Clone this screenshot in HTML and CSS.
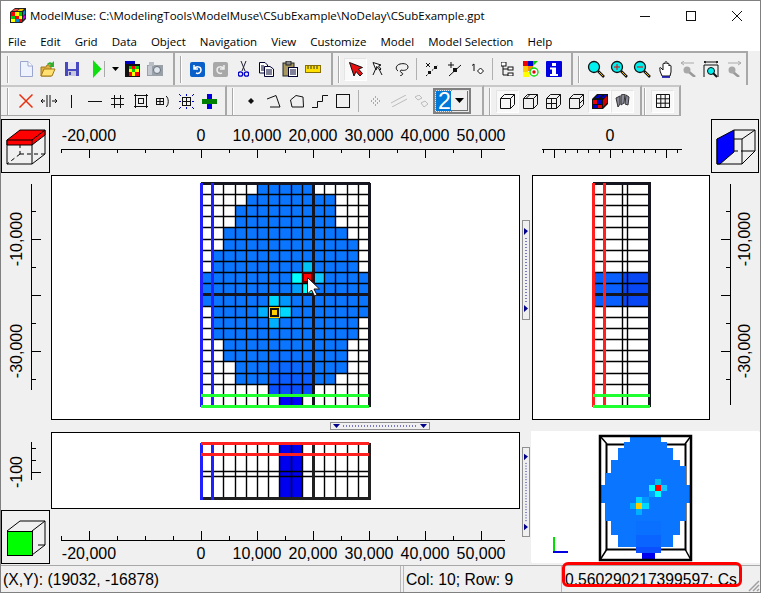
FILE: index.html
```html
<!DOCTYPE html>
<html lang="en">
<head>
    <meta charset="UTF-8">
    <title>ModelMuse</title>
    <link rel="stylesheet" href="styles.css">
</head>
<body>
<div class="window">
    <div class="titlebar">
        <svg class="app-icon" width="16" height="16" viewBox="0 0 16 16">
            <path d="M0 4L5 0H16V11L12 15H0Z" fill="#222"/>
            <rect x="1" y="4" width="4" height="4" fill="#f00"/><rect x="5" y="4" width="4" height="4" fill="#ff0"/><rect x="9" y="4" width="3" height="4" fill="#0c0"/>
            <rect x="1" y="8" width="4" height="3" fill="#0c0"/><rect x="5" y="8" width="4" height="3" fill="#f00"/><rect x="9" y="8" width="3" height="3" fill="#ff0"/>
            <rect x="1" y="11" width="4" height="3" fill="#ff0"/><rect x="5" y="11" width="4" height="3" fill="#08c"/><rect x="9" y="11" width="3" height="3" fill="#f00"/>
            <path d="M2 3L5 1H9L6 3Z" fill="#f44"/><path d="M7 3L10 1H14L12 3Z" fill="#fc0"/><path d="M13 4L15 2V6L13 8Z" fill="#08c"/><path d="M13 9L15 7V10L13 12Z" fill="#c0f"/>
        </svg>
        <span class="title-text">ModelMuse: C:\ModelingTools\ModelMuse\CSubExample\NoDelay\CSubExample.gpt</span>
        <div class="win-buttons">
            <svg width="46" height="30" viewBox="0 0 46 30"><path d="M18 15.500H28" stroke="#111"/></svg>
            <svg width="46" height="30" viewBox="0 0 46 30"><rect x="18.500" y="10.500" width="9" height="9" fill="none" stroke="#111"/></svg>
            <svg width="46" height="30" viewBox="0 0 46 30"><path d="M18 10L28 20M28 10L18 20" stroke="#111"/></svg>
        </div>
    </div>

    <div class="menubar">
        <span>File</span><span>Edit</span><span>Grid</span><span>Data</span><span>Object</span><span>Navigation</span><span>View</span><span>Customize</span><span>Model</span><span>Model Selection</span><span>Help</span>
    </div>

    <div class="toolrow tall">
        <div class="band w174 first">
            <i class="handle"></i>
            <span class="tool"><svg width="16" height="16" viewBox="0 0 16 16"><path d="M2.500 .5H10L14.500 5V15.500H2.500Z" fill="#eef2fc" stroke="#9aa6d0"/><path d="M10 .5V5H14.500" fill="#fff" stroke="#9aa6d0"/></svg></span>
            <span class="tool"><svg width="17" height="17" viewBox="0 0 17 17"><path d="M1 6H6L7 4H11V15H1Z" fill="#e0b040" stroke="#a07818"/><path d="M1 15L4 8H15L12 15Z" fill="#ffe070" stroke="#a07818"/><path d="M7 3C9 1 11 1 12 2L14 0V6H9L11 4C10 3 9 3 8 4Z" fill="#30b030"/></svg></span>
            <span class="tool"><svg width="16" height="16" viewBox="0 0 16 16"><path d="M1 1H15V15H1Z" fill="#4848c0"/><rect x="4" y="1" width="8" height="7" fill="#e8e8f4"/><rect x="4" y="10" width="8" height="5" fill="#c8c8dc"/><rect x="5" y="11" width="2" height="3" fill="#4848c0"/></svg></span>
            <span class="tool run"><svg width="14" height="18" viewBox="0 0 14 18"><path d="M1 0L9.500 9L1 18Z" fill="#10e010"/><path d="M12.500 1V17" stroke="#aaa"/></svg></span>
            <span class="tool drop"><svg width="7" height="4" viewBox="0 0 7 4"><path d="M0 0H7L3.500 4Z" fill="#000"/></svg></span>
            <span class="tool"><svg width="16" height="16" viewBox="0 0 16 16"><rect x="1" y="0" width="10" height="5" fill="#0000c0"/><rect x="1" y="3" width="15" height="13" fill="#111"/><rect x="5" y="5" width="3" height="3" fill="#0c0"/><rect x="8" y="5" width="3" height="3" fill="#f00"/><rect x="11" y="5" width="4" height="3" fill="#0c0"/><rect x="5" y="8" width="3" height="3" fill="#ff0"/><rect x="8" y="8" width="3" height="3" fill="#0c0"/><rect x="11" y="8" width="4" height="3" fill="#ff0"/><rect x="5" y="11" width="3" height="4" fill="#f00"/><rect x="8" y="11" width="3" height="4" fill="#ff0"/><rect x="11" y="11" width="4" height="4" fill="#f00"/></svg></span>
            <span class="tool"><svg width="16" height="14" viewBox="0 0 16 14"><rect x="0" y="3" width="16" height="11" fill="#9aa0a8"/><rect x="2" y="0" width="5" height="4" fill="#b8bcc4"/><circle cx="10" cy="8" r="3.500" fill="#dfe6ee" stroke="#6a7078"/><rect x="1" y="4" width="4" height="9" fill="#c4c8d0"/></svg></span>
        </div>
        <div class="band w158">
            <i class="handle"></i>
            <span class="tool"><svg width="15" height="15" viewBox="0 0 15 15"><rect width="15" height="15" rx="2" fill="#0a60c8"/><path d="M4 3V7H8M4 7C6 4 11 4 11 8C11 11 8 12 6 11" fill="none" stroke="#fff" stroke-width="1.500"/></svg></span>
            <span class="tool"><svg width="15" height="15" viewBox="0 0 15 15"><rect width="15" height="15" rx="2" fill="#a8a8a8"/><path d="M11 3V7H7M11 7C9 4 4 4 4 8C4 11 7 12 9 11" fill="none" stroke="#eee" stroke-width="1.500"/></svg></span>
            <span class="tool"><svg width="11" height="16" viewBox="0 0 11 16"><path d="M3 0L7 10M8 0L4 10" stroke="#223" fill="none"/><circle cx="2.500" cy="13" r="2.200" fill="none" stroke="#00c" stroke-width="1.300"/><circle cx="8.500" cy="13" r="2.200" fill="none" stroke="#00c" stroke-width="1.300"/></svg></span>
            <span class="tool"><svg width="15" height="15" viewBox="0 0 15 15"><path d="M.5 .5H6L8.500 3V11H.5Z" fill="#fff" stroke="#003"/><path d="M5.500 4.500H11L14.500 7V14.500H5.500Z" fill="#fff" stroke="#003"/><path d="M2 4H5M2 6H5M2 8H5M7 8H13M7 10H13M7 12H13" stroke="#003"/></svg></span>
            <span class="tool"><svg width="16" height="16" viewBox="0 0 16 16"><rect x="1" y="2" width="11" height="13" fill="#a89860" stroke="#222"/><rect x="4" y="0" width="5" height="4" fill="#888" stroke="#222"/><rect x="6.500" y="6.500" width="9" height="9" fill="#fff" stroke="#003"/><path d="M8 9H14M8 11H14M8 13H14" stroke="#003"/></svg></span>
            <span class="tool"><svg width="16" height="8" viewBox="0 0 16 8"><rect x=".5" y=".5" width="15" height="7" fill="#ffe000" stroke="#887000"/><path d="M3 1V4M6 1V4M9 1V4M12 1V4" stroke="#333"/></svg></span>
        </div>
        <div class="band w240">
            <i class="handle"></i>
            <span class="tool pressed"><svg width="14" height="15" viewBox="0 0 14 15"><path d="M.5 .5L5 14L7 9.500L11 14L13.500 11.500L9.500 7L13.500 5.500Z" fill="#e81010" stroke="#111"/></svg></span>
            <span class="tool"><svg width="13" height="14" viewBox="0 0 13 14"><path d="M1 .5L4 8L5.500 5L8 8L9 7L6.500 4L9 3Z" fill="#fff" stroke="#111"/><path d="M5 4L1 13M7 7L10 13" stroke="#111" fill="none"/></svg></span>
            <span class="tool"><svg width="14" height="13" viewBox="0 0 14 13"><path d="M3 8C0 6 1 2 5 1C9 0 13 1 13 4C13 7 9 8 6 7C5 8 5 9 7 10C9 11 7 12 5 13" fill="none" stroke="#111"/></svg></span>
            <i class="sep"></i>
            <span class="tool"><svg width="14" height="15" viewBox="0 0 14 15"><path d="M1 1L5 5M5 1L1 5" stroke="#111"/><path d="M1 14L13 3" stroke="#111" stroke-dasharray="2 2"/><rect x="3" y="9" width="3" height="3" fill="#111"/><rect x="9" y="4" width="3" height="3" fill="#111"/></svg></span>
            <span class="tool"><svg width="14" height="15" viewBox="0 0 14 15"><path d="M3 0V6M0 3H6M1 14L13 3" stroke="#111"/><rect x="5" y="6" width="4" height="4" fill="#111"/></svg></span>
            <span class="tool"><svg width="12" height="12" viewBox="0 0 12 12"><path d="M2 1L0 2.500M2 1V8" stroke="#111" fill="none"/><path d="M8.500 5L11.500 8L8.500 11L5.500 8Z" fill="#fff" stroke="#111"/></svg></span>
            <i class="sep"></i>
            <span class="tool"><svg width="13" height="14" viewBox="0 0 13 14"><path d="M2 1V13H7M2 7H7" fill="none" stroke="#111"/><rect x="0" y="0" width="5" height="4" fill="#fff" stroke="#111"/><rect x="7" y="5" width="5" height="3" fill="#fff" stroke="#111"/><rect x="7" y="11" width="5" height="3" fill="#fff" stroke="#111"/></svg></span>
            <span class="tool"><svg width="16" height="16" viewBox="0 0 16 16"><rect width="5" height="5" fill="#e00"/><rect x="5" width="5" height="5" fill="#00c"/><path d="M10 0H15L10 5Z" fill="#0c0"/><rect y="5" width="5" height="6" fill="#fc0"/><rect x="5" y="5" width="5" height="5" fill="#f80"/><rect y="11" width="6" height="5" fill="#ff0"/><circle cx="11" cy="11" r="4" fill="#fff" stroke="#0d0" stroke-width="1.300"/><circle cx="11" cy="11" r="1.700" fill="#e00"/></svg></span>
            <span class="tool"><svg width="16" height="16" viewBox="0 0 16 16"><rect width="16" height="16" rx="1" fill="#0000e0"/><rect x="6" y="2" width="4" height="3" fill="#fff"/><path d="M4 6.500H10V13H12V15H4V13H6V8.500H4Z" fill="#fff"/></svg></span>
        </div>
        <div class="band w175">
            <i class="handle"></i>
            <span class="tool"><svg width="18" height="18" viewBox="0 0 18 18"><path d="M11 11L17 17" stroke="#111" stroke-width="2.500"/><path d="M12 12L16 16" stroke="#e0b000"/><circle cx="7" cy="7" r="5.500" fill="#00f0f0" stroke="#111" stroke-width="1.300"/></svg></span>
            <span class="tool"><svg width="18" height="18" viewBox="0 0 18 18"><path d="M11 11L17 17" stroke="#111" stroke-width="2.500"/><path d="M12 12L16 16" stroke="#e0b000"/><circle cx="7" cy="7" r="5.500" fill="#00f0f0" stroke="#111" stroke-width="1.300"/><path d="M4 7H10M7 4V10" stroke="#e00"/></svg></span>
            <span class="tool"><svg width="18" height="18" viewBox="0 0 18 18"><path d="M11 11L17 17" stroke="#111" stroke-width="2.500"/><path d="M12 12L16 16" stroke="#e0b000"/><circle cx="7" cy="7" r="5.500" fill="#00f0f0" stroke="#111" stroke-width="1.300"/><path d="M4 7H10" stroke="#e00"/></svg></span>
            <span class="tool"><svg width="14" height="17" viewBox="0 0 14 17"><path d="M2 8V10L4 15H12L13 11V5C13 4 11 4 11 5V3C11 2 9 2 9 3V2C9 0 7 0 7 2V3C7 2 5 2 5 3V9L3 7C2 6 1 7 2 8Z" fill="#fff" stroke="#111"/><path d="M4 16H12" stroke="#00a" stroke-width="1.500"/></svg></span>
            <span class="tool"><svg width="16" height="16" viewBox="0 0 16 16"><path d="M1 2H14M1 2L4 0M1 2L4 4" stroke="#aaa" fill="none"/><path d="M9 11L15 16" stroke="#999" stroke-width="2.500"/><circle cx="7" cy="9" r="3.500" fill="#a8a8a8"/></svg></span>
            <span class="tool"><svg width="16" height="17" viewBox="0 0 16 17"><path d="M1 1H15M1 1L3 0M1 1L3 2M15 1L13 0M15 1L13 2" stroke="#111" fill="none"/><path d="M1 16V4H15V16" fill="none" stroke="#111"/><circle cx="8" cy="10" r="3.500" fill="#00f0f0" stroke="#111"/><path d="M10 12L14 16" stroke="#111" stroke-width="2"/></svg></span>
            <span class="tool"><svg width="16" height="16" viewBox="0 0 16 16"><path d="M2 2H15M15 2L12 0M15 2L12 4" stroke="#aaa" fill="none"/><path d="M7 11L13 16" stroke="#999" stroke-width="2.500"/><circle cx="6" cy="9" r="3.500" fill="#a8a8a8"/></svg></span>
        </div>
    </div>

    <div class="toolrow">
        <div class="band w226 first">
            <i class="handle"></i>
            <span class="tool"><svg width="14" height="14" viewBox="0 0 14 14"><path d="M.5 .5L13.500 13.500M13.500 .5L.5 13.500" stroke="#e83010" stroke-width="1.500"/></svg></span>
            <span class="tool"><svg width="16" height="12" viewBox="0 0 16 12"><path d="M6 0V12M9 0V12M0 6H4M11 6H16M0 6L2 4M0 6L2 8M16 6L14 4M16 6L14 8" stroke="#111" fill="none"/></svg></span>
            <span class="tool"><svg width="3" height="13" viewBox="0 0 3 13"><path d="M1.500 0V13" stroke="#111"/></svg></span>
            <span class="tool"><svg width="14" height="3" viewBox="0 0 14 3"><path d="M0 1.500H14" stroke="#111"/></svg></span>
            <span class="tool"><svg width="13" height="13" viewBox="0 0 13 13"><path d="M3.500 0V13M9.500 0V13M0 3.500H13M0 9.500H13" stroke="#111"/></svg></span>
            <span class="tool"><svg width="14" height="14" viewBox="0 0 14 14"><rect x="1.500" y="1.500" width="11" height="11" fill="none" stroke="#111"/><path d="M0 1.500H14M0 12.500H14M1.500 0V14M12.500 0V14" stroke="#111"/><rect x="4.500" y="4.500" width="5" height="5" fill="none" stroke="#111"/></svg></span>
            <span class="tool"><svg width="15" height="13" viewBox="0 0 15 13"><rect x=".5" y="3.500" width="7" height="6" fill="none" stroke="#111"/><path d="M4 3.500V9.500M.5 6.500H7.500M10 1C13 3 13 10 10 12" stroke="#111" fill="none"/></svg></span>
            <span class="tool"><svg width="15" height="15" viewBox="0 0 15 15"><rect x="3.500" y="3.500" width="8" height="8" fill="none" stroke="#111"/><path d="M7.500 3.500V11.500M3.500 7.500H11.500" stroke="#111"/><path d="M0 0L2 2M15 0L13 2M0 15L2 13M15 15L13 13M7.500 0V2M7.500 13V15M0 7.500H2M13 7.500H15" stroke="#00d"/></svg></span>
            <span class="tool"><svg width="15" height="15" viewBox="0 0 15 15"><rect x="5" y="0" width="5" height="15" fill="#0000e0"/><rect x="0" y="5" width="15" height="5" fill="#008000"/></svg></span>
        </div>
        <div class="band w257">
            <i class="handle"></i>
            <span class="tool"><svg width="6" height="6" viewBox="0 0 6 6"><path d="M3 0L6 3L3 6L0 3Z" fill="#111"/></svg></span>
            <span class="tool"><svg width="14" height="13" viewBox="0 0 14 13"><path d="M0 4L9 .5L13 12H3" fill="none" stroke="#111"/></svg></span>
            <span class="tool"><svg width="14" height="13" viewBox="0 0 14 13"><path d="M0.500 5L6 .5L13 2L13.500 12L2 12Z" fill="none" stroke="#111"/></svg></span>
            <span class="tool"><svg width="16" height="13" viewBox="0 0 16 13"><path d="M0 12.500H5.500V6.500H10.500V.5H16" fill="none" stroke="#111"/></svg></span>
            <span class="tool"><svg width="14" height="14" viewBox="0 0 14 14"><rect x=".5" y=".5" width="13" height="13" fill="none" stroke="#111"/></svg></span>
            <i class="sep wide"></i>
            <span class="tool"><svg width="11" height="11" viewBox="0 0 11 11"><path d="M5 1H6M3 3H4M7 3H8M1 5H2M5 5H6M9 5H10M3 7H4M7 7H8M5 9H6" stroke="#aaa" stroke-width="2"/></svg></span>
            <span class="tool"><svg width="16" height="12" viewBox="0 0 16 12"><path d="M0 8L15 0M1 12L16 4" stroke="#bbb"/></svg></span>
            <span class="tool"><svg width="15" height="13" viewBox="0 0 15 13"><path d="M1 2L5 0L8 3L4 5ZM7 8L11 6L14 9L10 12Z" fill="none" stroke="#bbb"/></svg></span>
            <div class="combo"><span class="combo-val">2</span><span class="combo-btn"><svg width="9" height="5" viewBox="0 0 9 5"><path d="M0 0H9L4.500 5Z" fill="#000"/></svg></span></div>
        </div>
        <div class="band w158">
            <i class="handle"></i>
            <span class="tool pressed"><svg width="15" height="15" viewBox="0 0 15 15"><path d="M.5 4.500H10.500V14.500H.5ZM.5 4.500L4.500 .5H14.500L10.500 4.500M14.500 .5V10.500L10.500 14.500" fill="none" stroke="#111"/></svg></span>
            <span class="tool"><svg width="15" height="15" viewBox="0 0 15 15"><path d="M.5 4.500H10.500V14.500H.5ZM.5 4.500L4.500 .5H14.500L10.500 4.500M14.500 .5V10.500L10.500 14.500M3 4.500L7 .5" fill="none" stroke="#111"/></svg></span>
            <span class="tool"><svg width="15" height="15" viewBox="0 0 15 15"><path d="M.5 4.500H10.500V14.500H.5ZM.5 4.500L4.500 .5H14.500L10.500 4.500M14.500 .5V10.500L10.500 14.500M.5 9.500H10.500M5.500 4.500V14.500" fill="none" stroke="#111"/></svg></span>
            <span class="tool"><svg width="15" height="15" viewBox="0 0 15 15"><path d="M.5 4.500H10.500V14.500H.5ZM.5 4.500L4.500 .5H14.500L10.500 4.500M14.500 .5V10.500L10.500 14.500M10.500 9.500L14.500 5.500" fill="none" stroke="#111"/></svg></span>
            <span class="tool pressed"><svg width="16" height="15" viewBox="0 0 16 15"><path d="M0 5L5 0H16V10L11 15H0Z" fill="#111"/><rect x="1" y="6" width="4" height="4" fill="#e00"/><rect x="6" y="6" width="4" height="4" fill="#00c"/><rect x="1" y="11" width="4" height="3" fill="#00c"/><rect x="6" y="11" width="4" height="3" fill="#e00"/><path d="M3 4L6 1H10L7 4ZM9 4L12 1H15L12 4Z" fill="#00c"/><path d="M11 6L15 2V9L11 13Z" fill="#c00"/></svg></span>
            <span class="tool pressed"><svg width="15" height="14" viewBox="0 0 15 14"><path d="M1 4L5 2V10L3 13ZM6 1L10 0L9 9L6 11ZM11 1L14 3L13 11L10 10Z" fill="#889" stroke="#333"/></svg></span>
        </div>
        <div class="band w39 slim">
            <i class="handle"></i>
            <span class="tool pressed"><svg width="14" height="14" viewBox="0 0 14 14"><path d="M.5 .5H13.500V13.500H.5ZM4.800 .5V13.500M9.200 .5V13.500M.5 4.800H13.500M.5 9.200H13.500" fill="none" stroke="#111"/></svg></span>
        </div>
    </div>

    <div class="workspace">
        <!-- top row: corner cube, ruler, side ruler, corner cube -->
        <div class="corner">
            <svg width="47" height="52" viewBox="2 120 47 52">
                <path d="M20 130V154M20 154H45M20 154L7 164" fill="none" stroke="#000" stroke-dasharray="4 3"/>
                <path d="M7 140H32V164H7ZM32 164L45 154V130" fill="none" stroke="#000"/>
                <path d="M7 140L20 130H45V135L32 145H7Z" fill="#f00" stroke="#000"/>
                <path d="M32 140V145M32 140L45 130M7 140H32" stroke="#000" fill="none"/>
            </svg>
        </div>
        <svg class="ruler" width="469" height="59" viewBox="51 116 469 59">
            <path d="M61 149.500H505M61.500 149V153M117.500 149V153M145.500 149V153M173.500 149V153M229.500 149V153M285.500 149V153M341.500 149V153M397.500 149V153M453.500 149V153M89.500 149V158M201.500 149V158M257.500 149V158M313.500 149V158M369.500 149V158M425.500 149V158M481.500 149V158" stroke="#000"/>
            <text x="89" y="141">-20,000</text><text x="201" y="141">0</text><text x="257" y="141">10,000</text><text x="313" y="141">20,000</text><text x="369" y="141">30,000</text><text x="425" y="141">40,000</text><text x="481" y="141">50,000</text>
        </svg>
        <div class="gap"></div>
        <svg class="ruler" width="178" height="59" viewBox="532 116 178 59">
            <path d="M542 149.500H682M543.500 149V153M565.500 149V153M577.500 149V153M588.500 149V153M599.500 149V153M622.500 149V153M633.500 149V153M644.500 149V153M655.500 149V153M677.500 149V153M554.500 149V158M610.500 149V158M666.500 149V158" stroke="#000"/>
            <text x="610" y="141">0</text>
        </svg>
        <div class="corner right">
            <svg width="46" height="52" viewBox="712 120 46 52">
                <path d="M734 130H755V151H745M742 139L755 130M742 164L755 151" fill="none" stroke="#000"/>
                <path d="M734 151H745" fill="none" stroke="#000" stroke-dasharray="4 3"/>
                <path d="M717 139H742V164H717Z" fill="none" stroke="#000"/>
                <path d="M717 139L734 130V152L720 164H717Z" fill="#00f" stroke="#000"/>
            </svg>
        </div>

        <!-- middle row: top view and side view -->
        <svg class="ruler" width="50" height="245" viewBox="1 175 50 245">
            <path d="M31.500 184V390M32 211.500H36M32 267.500H36M32 323.500H36M32 379.500H36M32 239.500H41M32 295.500H41M32 351.500H41" stroke="#000"/>
            <text transform="rotate(-90 22 239)" x="22" y="239">-10,000</text>
            <text transform="rotate(-90 22 351)" x="22" y="351">-30,000</text>
        </svg>
        <div class="view">
            <svg width="469" height="245" viewBox="51 175 469 245" shape-rendering="crispEdges">
                <g fill="#0a76ff">
                    <rect x="257" y="183" width="56" height="11"/>
                    <rect x="246" y="194" width="89" height="11"/>
                    <rect x="235" y="205" width="100" height="23"/>
                    <rect x="223" y="228" width="124" height="11"/>
                    <rect x="223" y="239" width="135" height="11"/>
                    <rect x="212" y="250" width="146" height="22"/>
                    <rect x="201" y="272" width="168" height="34"/>
                    <rect x="212" y="306" width="157" height="11"/>
                    <rect x="212" y="317" width="146" height="22"/>
                    <rect x="223" y="339" width="124" height="23"/>
                    <rect x="235" y="362" width="112" height="11"/>
                    <rect x="235" y="373" width="100" height="11"/>
                </g>
                <rect x="268" y="351" width="45" height="11" fill="#0a70ff"/>
                <rect x="268" y="362" width="45" height="11" fill="#0a68ff"/>
                <rect x="268" y="373" width="45" height="11" fill="#0a5eff"/>
                <rect x="268" y="384" width="45" height="11" fill="#0a50ff"/>
                <rect x="279" y="395" width="23" height="11" fill="#0000ff"/>
                <!-- the two wells -->
                <rect x="302" y="261" width="11" height="11" fill="#00c4f4"/>
                <rect x="291" y="272" width="11" height="11" fill="#00ffff"/>
                <rect x="313" y="272" width="11" height="11" fill="#10c8ff"/>
                <rect x="291" y="283" width="11" height="12" fill="#00a0ff"/>
                <rect x="302" y="283" width="11" height="12" fill="#00ffff"/>
                <rect x="268" y="295" width="11" height="11" fill="#00d8ff"/>
                <rect x="279" y="295" width="12" height="11" fill="#0098ff"/>
                <rect x="257" y="306" width="11" height="11" fill="#00b0ff"/>
                <rect x="279" y="306" width="12" height="11" fill="#00d8ff"/>
                <rect x="268" y="317" width="11" height="11" fill="#00b0ff"/>
                <path class="cell-lines" d="M212.500 183V406M223.500 183V406M235.500 183V406M246.500 183V406M257.500 183V406M268.500 183V406M279.500 183V406M291.500 183V406M302.500 183V406M324.500 183V406M335.500 183V406M347.500 183V406M358.500 183V406M201 194.500H369M201 205.500H369M201 216.500H369M201 227.500H369M201 239.500H369M201 250.500H369M201 261.500H369M201 272.500H369M201 283.500H369M201 306.500H369M201 317.500H369M201 328.500H369M201 339.500H369M201 350.500H369M201 361.500H369M201 373.500H369M201 384.500H369"/>
                <path d="M201 183.500H370M201 294.500H370M313 183V406M369 183V407" stroke="#151520" stroke-width="3" fill="none"/>
                <rect x="302" y="272" width="11" height="11" fill="#500000"/>
                <rect x="304" y="274" width="7" height="7" fill="#f00"/>
                <rect x="269" y="307" width="11" height="11" fill="#fc0"/>
                <rect x="270" y="308" width="9" height="9" fill="#111"/>
                <rect x="272" y="310" width="5" height="5" fill="#fc0"/>
                <path d="M201.500 183V407M212.500 183V407" stroke="#2020ff" stroke-width="3" fill="none"/>
                <path d="M201 395.500H369M201 406.500H369" stroke="#20ff30" stroke-width="3" fill="none"/>
                <path d="M307.500 277.500V294L311.500 290L314.500 296L317 295L314 289H319.500Z" fill="#fff" stroke="#111" shape-rendering="auto"/>
            </svg>
        </div>
        <div class="splitter">
            <div class="grip grip-v"><svg width="6" height="88" viewBox="0 0 6 88"><path d="M1 2L5 5L1 9ZM1 79L5 82.500L1 86Z" fill="#00008b"/><path d="M3 12V77" stroke="#00008b" stroke-dasharray="1 2"/></svg></div>
        </div>
        <div class="view">
            <svg width="178" height="245" viewBox="532 175 178 245" shape-rendering="crispEdges">
                <rect x="593" y="272" width="30" height="34" fill="#0a60ff"/>
                <rect x="623" y="272" width="27" height="34" fill="#0848f4"/>
                <path class="cell-lines" d="M622.500 183V406M627.500 183V406M593 194.500H650M593 205.500H650M593 216.500H650M593 227.500H650M593 239.500H650M593 250.500H650M593 261.500H650M593 272.500H650M593 283.500H650M593 306.500H650M593 317.500H650M593 328.500H650M593 339.500H650M593 350.500H650M593 361.500H650M593 373.500H650M593 384.500H650"/>
                <path d="M593 183.500H651M593 294.500H651M649.500 183V407" stroke="#151520" stroke-width="3" fill="none"/>
                <path d="M593.500 183V407M604.500 183V407" stroke="#ff2020" stroke-width="3" fill="none"/>
                <path d="M593 395.500H650M593 406.500H650" stroke="#20ff30" stroke-width="3" fill="none"/>
            </svg>
        </div>
        <svg class="ruler" width="50" height="245" viewBox="710 175 50 245">
            <path d="M730.500 184V405M726 211.500H730M726 267.500H730M726 323.500H730M726 379.500H730M721 239.500H730M721 295.500H730M721 351.500H730" stroke="#000"/>
            <text transform="rotate(-90 750 239)" x="750" y="239">-10,000</text>
            <text transform="rotate(-90 750 351)" x="750" y="351">-30,000</text>
        </svg>

        <!-- splitter row -->
        <div class="gap"></div>
        <div class="splitter-h">
            <div class="grip grip-h"><svg width="98" height="6" viewBox="0 0 98 6"><path d="M2 1H9L5.500 5ZM89 1H96L92.500 5Z" fill="#00008b"/><path d="M12 3H86" stroke="#00008b" stroke-dasharray="1 2"/></svg></div>
        </div>
        <div class="gap span3"></div>

        <!-- bottom rows: front view, 3D view, ruler -->
        <svg class="ruler" width="50" height="77" viewBox="1 432 50 77">
            <path d="M31.500 442V480M32 448.500H36M32 460.500H36M32 472.500H41" stroke="#000"/>
            <text transform="rotate(-90 22 472)" x="22" y="472">-100</text>
        </svg>
        <div class="view">
            <svg width="469" height="77" viewBox="51 432 469 77" shape-rendering="crispEdges">
                <rect x="279" y="443" width="23" height="56" fill="#0000f0"/>
                <path class="cell-lines" d="M223.500 443V499M235.500 443V499M246.500 443V499M257.500 443V499M268.500 443V499M279.500 443V499M291.500 443V499M302.500 443V499M324.500 443V499M335.500 443V499M347.500 443V499M358.500 443V499M201 471.500H369M201 476.500H369"/>
                <path d="M201 498.500H370M313 443V500M369 443V500" stroke="#202020" stroke-width="3" fill="none"/>
                <path d="M201.500 443V500M212.500 443V500" stroke="#2020ff" stroke-width="3" fill="none"/>
                <path d="M201 443.500H369M201 454.500H369" stroke="#ff2020" stroke-width="3" fill="none"/>
            </svg>
        </div>
        <div class="splitter tall-split">
            <div class="grip grip-v low"><svg width="6" height="80" viewBox="0 0 6 88" preserveAspectRatio="none"><path d="M1 2L5 5L1 9ZM1 79L5 82.500L1 86Z" fill="#00008b"/><path d="M3 12V77" stroke="#00008b" stroke-dasharray="1 2"/></svg></div>
        </div>
        <div class="view3d">
            <svg width="229" height="131" viewBox="532 432 229 131" shape-rendering="crispEdges">
                <!-- back of the box lies behind the surface -->
                <g fill="none" stroke="#000" shape-rendering="auto">
                    <rect x="606.500" y="444.500" width="79" height="105" stroke-width="2"/>
                    <path d="M600 436L607 444M691 436L685 444M600 560L607 549M691 560L685 549" stroke-width="1.500"/>
                </g>
                <g fill="#0a76ff">
                    <rect x="630" y="436" width="31" height="6"/><rect x="624" y="442" width="43" height="6"/><rect x="618" y="448" width="55" height="12"/>
                    <rect x="611" y="460" width="69" height="6"/><rect x="611" y="466" width="75" height="7"/><rect x="605" y="473" width="81" height="12"/>
                    <rect x="599" y="485" width="93" height="18"/><rect x="605" y="503" width="81" height="18"/><rect x="611" y="521" width="69" height="14"/>
                    <rect x="618" y="535" width="55" height="12"/>
                </g>
                <rect x="636" y="521" width="25" height="14" fill="#0a70ff"/><rect x="636" y="535" width="25" height="12" fill="#0a64ff"/>
                <rect x="636" y="547" width="25" height="6" fill="#0a50ff"/><rect x="642" y="553" width="13" height="7" fill="#0000ee"/>
                <rect x="655" y="479" width="6" height="6" fill="#00c0f0"/><rect x="649" y="485" width="6" height="6" fill="#00ffff"/><rect x="661" y="485" width="6" height="6" fill="#10c8ff"/>
                <rect x="655" y="491" width="6" height="6" fill="#00ffff"/><rect x="649" y="491" width="6" height="6" fill="#00a0ff"/><rect x="655" y="485" width="6" height="6" fill="#f00"/>
                <rect x="636" y="497" width="6" height="6" fill="#00d8ff"/><rect x="642" y="497" width="7" height="6" fill="#0098ff"/><rect x="630" y="503" width="6" height="6" fill="#00b0ff"/>
                <rect x="636" y="503" width="6" height="6" fill="#fc0"/><rect x="642" y="503" width="7" height="6" fill="#00d8ff"/><rect x="636" y="509" width="6" height="6" fill="#00b0ff"/>
                <rect x="600" y="436" width="91" height="124" fill="none" stroke="#000" stroke-width="2.500" shape-rendering="auto"/>
                <path d="M554 537V552" stroke="#00e000" stroke-width="2"/>
                <path d="M553 551.500H568" stroke="#0000e0" stroke-width="2"/>
            </svg>
        </div>

        <div class="corner low">
            <svg width="47" height="52" viewBox="2 511 47 52">
                <path d="M32 531L45 521H20L7 531M45 521V545L32 555M45 545H38" fill="none" stroke="#000"/>
                <rect x="7.500" y="531.500" width="25" height="24" fill="#0f0" stroke="#000"/>
            </svg>
        </div>
        <svg class="ruler" width="469" height="56" viewBox="51 509 469 56">
            <path d="M61 540.500H505M61.500 536V540M117.500 536V540M145.500 536V540M173.500 536V540M229.500 536V540M285.500 536V540M341.500 536V540M397.500 536V540M453.500 536V540M89.500 531V540M201.500 531V540M257.500 531V540M313.500 531V540M369.500 531V540M425.500 531V540M481.500 531V540" stroke="#000"/>
            <text x="89" y="559">-20,000</text><text x="201" y="559">0</text><text x="257" y="559">10,000</text><text x="313" y="559">20,000</text><text x="369" y="559">30,000</text><text x="425" y="559">40,000</text><text x="481" y="559">50,000</text>
        </svg>
    </div>

    <div class="statusbar">
        <div class="panel p1">(X,Y): (19032, -16878)</div>
        <div class="panel p2">Col: 10; Row: 9</div>
        <div class="panel p3">0.560290217399597: Cs</div>
        <div class="red-box"></div>
        <svg class="size-grip" width="12" height="12" viewBox="0 0 12 12"><path d="M11 1L1 11M11 5L5 11M11 9L9 11" stroke="#a0a0a0" stroke-width="1.500"/></svg>
    </div>
</div>
</body>
</html>
```

FILE: styles.css
```css
html, body {
    margin: 0;
    padding: 0;
    background-color: #f0f0f0;
}
.window {
    position: relative;
    box-sizing: border-box;
    width: 761px;
    height: 593px;
    border: 1px solid #808080;
    overflow: hidden;
    display: flex;
    flex-direction: column;
    font-family: "Liberation Sans", Arial, sans-serif;
}

/* title and menu */
.titlebar {
    height: 30px;
    flex: none;
    background-color: #fff;
    display: flex;
    align-items: center;
}
.app-icon {
    margin-left: 9px;
    margin-right: 4px;
}
.title-text {
    font-family: "Open Sans", sans-serif;
    font-size: 11.5px;
    color: #000;
    white-space: nowrap;
    margin-bottom: 2px;
}
.win-buttons {
    margin-left: auto;
    display: flex;
    align-items: center;
}
.win-buttons svg {
    display: block;
}
.menubar {
    height: 20px;
    flex: none;
    background-color: #fff;
    display: flex;
    align-items: center;
    gap: 14px;
    padding-left: 7px;
    font-family: "Open Sans", sans-serif;
    font-size: 11.5px;
    color: #000;
}

/* toolbars */
.toolrow {
    height: 31px;
    flex: none;
    display: flex;
}
.toolrow.tall {
    height: 34px;
}
.band {
    box-sizing: border-box;
    flex: none;
    display: flex;
    align-items: center;
    padding-left: 5px;
    border-top: 2px solid #a8a8a8;
    border-right: 2px solid #a8a8a8;
}
.toolrow:not(.tall) .band {
    border-bottom: 1px solid #a8a8a8;
    border-top-color: #c8c8c8;
}
.band.first {
    padding-left: 6px;
}
.band.slim {
    padding-left: 2px;
}
.w174 { width: 174px; }
.w158 { width: 158px; }
.w240 { width: 240px; }
.w175 { width: 175px; }
.w226 { width: 226px; }
.w257 { width: 257px; }
.w39 { width: 39px; }
.handle {
    flex: none;
    width: 1px;
    height: 27px;
    margin-right: 5px;
    background-color: #a8a8a8;
    border-right: 1px solid #fff;
}
.tall .band:not(.first) .handle {
    margin-right: 4px;
}
.tool {
    flex: none;
    box-sizing: border-box;
    width: 23px;
    height: 23px;
    display: flex;
    align-items: center;
    justify-content: center;
}
.tool.run {
    width: 28px;
    justify-content: flex-end;
    padding-right: 5px;
}
.tool.drop {
    width: 9px;
}
.tool.pressed {
    background-color: #f9f9f9;
    border-top: 1px solid #e4e4e4;
    border-left: 1px solid #e4e4e4;
    border-right: 1px solid #fff;
    border-bottom: 1px solid #fff;
}
.sep {
    flex: none;
    width: 1px;
    height: 22px;
    margin: 0 3px 0 3px;
    background-color: #b0b0b0;
}
.sep.wide {
    margin: 0 5px 0 4px;
}
.combo {
    flex: none;
    box-sizing: border-box;
    width: 38px;
    height: 26px;
    padding: 1px;
    display: flex;
    border: 2px solid #808080;
    background-color: #e8e8e8;
}
.combo-val {
    flex: 1;
    background-color: #0078d7;
    color: #fff;
    font-size: 23px;
    line-height: 20px;
    padding-left: 2px;
    outline: 1px dotted #e08000;
}
.combo-btn {
    width: 16px;
    display: flex;
    align-items: center;
    justify-content: center;
    background-color: #f0f0f0;
    border-right: 1px solid #707070;
    border-bottom: 1px solid #707070;
}

/* main area */
.workspace {
    flex: 1;
    display: grid;
    grid-template-columns: 50px 469px 12px 178px 50px;
    grid-template-rows: 59px 245px 12px 77px 56px;
}
.workspace svg {
    display: block;
}
.ruler text {
    font-size: 16px;
    text-anchor: middle;
    fill: #000;
}
.corner {
    box-sizing: border-box;
    width: 49px;
    height: 54px;
    margin-top: 3px;
    border: 1px solid #000;
}
.corner.low {
    margin-top: 1px;
}
.corner.right {
    width: 48px;
    margin-left: 1px;
}
.view {
    position: relative;
    z-index: 0;
    outline: 1px solid #000;
    outline-offset: -1px;
    background-color: #fff;
    overflow: hidden;
}
.view svg {
    position: relative;
    z-index: -1;
}
.cell-lines {
    fill: none;
    stroke: #000;
    stroke-width: 1.4;
    shape-rendering: auto;
}
.splitter {
    display: flex;
    justify-content: center;
}
.tall-split {
    grid-row: span 2;
}
.splitter-h {
    padding-left: 279px;
    display: flex;
    align-items: center;
}
.span3 {
    grid-column: span 3;
}
.grip {
    flex: none;
    box-sizing: border-box;
    border: 1px solid #909090;
    display: flex;
    align-items: center;
    justify-content: center;
    background-color: #f0f0f0;
}
.grip-v {
    width: 8px;
    height: 100px;
    margin-top: 45px;
}
.grip-v.low {
    margin-top: 15px;
    height: 90px;
}
.grip-h {
    width: 100px;
    height: 8px;
}
.view3d {
    grid-column: span 2;
    grid-row: span 2;
    height: 131px;
    background-color: #fff;
    box-shadow: -1px -1px 0 #fff;
}

/* status */
.statusbar {
    flex: 1;
    display: flex;
    border-top: 1px solid #a8a8a8;
    font-size: 15.7px;
    color: #000;
}
.panel {
    box-sizing: border-box;
    padding-left: 2px;
    padding-top: 5px;
    white-space: nowrap;
    border-right: 1px solid #b8b8b8;
}
.p1 { width: 400px; }
.p2 { width: 159px; margin-left: 2px; border-left: 1px solid #b8b8b8; }
.p3 { width: 178px; padding-left: 3px; border-right: none; }
.red-box {
    position: absolute;
    left: 561px;
    bottom: 5px;
    box-sizing: border-box;
    width: 180px;
    height: 25px;
    border: 3px solid #f00;
    border-radius: 6px;
}
.size-grip {
    position: absolute;
    right: 0;
    bottom: 0;
}
```
